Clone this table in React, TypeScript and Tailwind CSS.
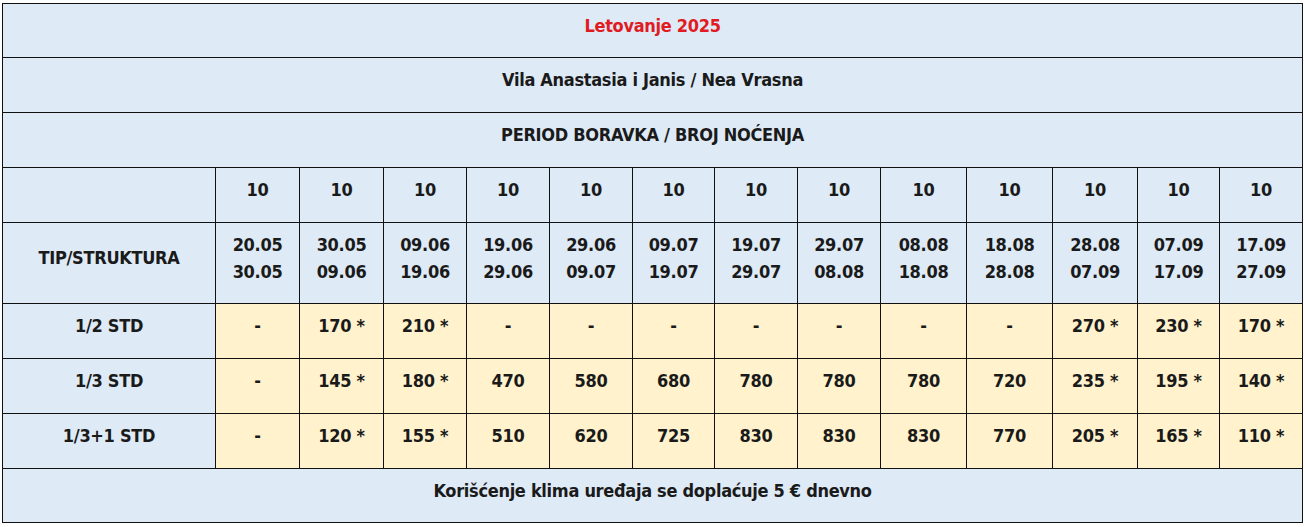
const colWidths = [213, 84, 84, 83, 83, 83, 82, 83, 83, 86, 86, 85, 82, 83];

const periods = [
  ['20.05', '30.05'],
  ['30.05', '09.06'],
  ['09.06', '19.06'],
  ['19.06', '29.06'],
  ['29.06', '09.07'],
  ['09.07', '19.07'],
  ['19.07', '29.07'],
  ['29.07', '08.08'],
  ['08.08', '18.08'],
  ['18.08', '28.08'],
  ['28.08', '07.09'],
  ['07.09', '17.09'],
  ['17.09', '27.09'],
];

const prices: { name: string; values: string[] }[] = [
  { name: '1/2 STD', values: ['-', '170 *', '210 *', '-', '-', '-', '-', '-', '-', '-', '270 *', '230 *', '170 *'] },
  { name: '1/3 STD', values: ['-', '145 *', '180 *', '470', '580', '680', '780', '780', '780', '720', '235 *', '195 *', '140 *'] },
  { name: '1/3+1 STD', values: ['-', '120 *', '155 *', '510', '620', '725', '830', '830', '830', '770', '205 *', '165 *', '110 *'] },
];

const cell = 'border border-[#111] text-center align-middle pb-[11px] px-0';

export default function App() {
  return (
    <div
      className="bg-white w-[1305px] h-[527px] pt-[3px] pl-[2px] text-[#1a1a1a] font-bold text-[18px] leading-[27px] tracking-[-0.3px]"
      style={{ fontFamily: '"Liberation Sans Narrow", "DejaVu Sans Condensed", "Roboto Condensed", sans-serif' }}
    >
      <table className="table-fixed border-collapse w-[1300px]">
        <colgroup>
          {colWidths.map((w, i) => (
            <col key={i} style={{ width: w }} />
          ))}
        </colgroup>
        <tbody>
          <tr className="h-[54px] bg-[#deeaf6]">
            <td colSpan={14} className={`${cell} text-[#e01b22]`}>
              Letovanje 2025
            </td>
          </tr>
          <tr className="h-[55px] bg-[#deeaf6]">
            <td colSpan={14} className={cell}>
              Vila Anastasia i Janis / Nea Vrasna
            </td>
          </tr>
          <tr className="h-[55px] bg-[#deeaf6]">
            <td colSpan={14} className={cell}>
              PERIOD BORAVKA / BROJ NOĆENJA
            </td>
          </tr>
          <tr className="h-[55px] bg-[#deeaf6]">
            <td className={cell}></td>
            {periods.map((_, i) => (
              <td key={i} className={cell}>
                10
              </td>
            ))}
          </tr>
          <tr className="h-[81px] bg-[#deeaf6]">
            <td className={cell}>TIP/STRUKTURA</td>
            {periods.map(([from, to], i) => (
              <td key={i} className={cell}>
                {from}
                <br />
                {to}
              </td>
            ))}
          </tr>
          {prices.map((row) => (
            <tr key={row.name} className="h-[55px]">
              <td className={`${cell} bg-[#deeaf6]`}>{row.name}</td>
              {row.values.map((v, i) => (
                <td key={i} className={`${cell} bg-[#fff2cc]`}>
                  {v}
                </td>
              ))}
            </tr>
          ))}
          <tr className="h-[54px] bg-[#deeaf6]">
            <td colSpan={14} className={cell}>
              Korišćenje klima uređaja se doplaćuje 5 € dnevno
            </td>
          </tr>
        </tbody>
      </table>
    </div>
  );
}
